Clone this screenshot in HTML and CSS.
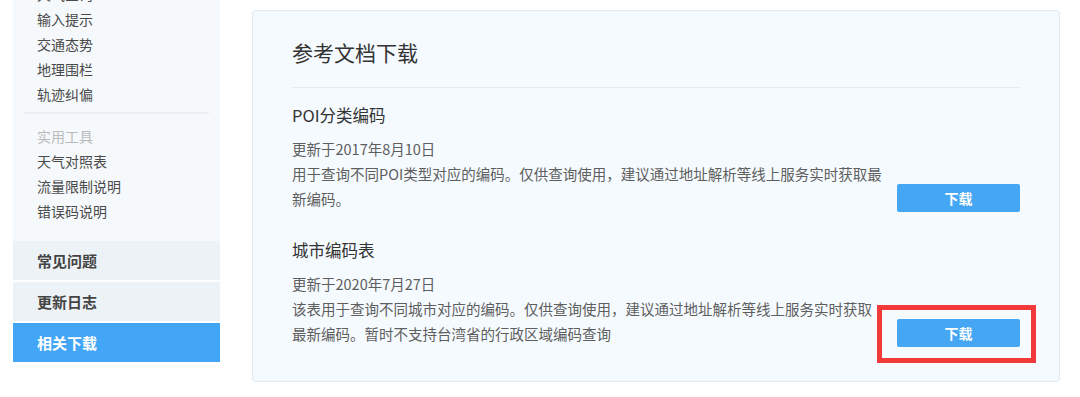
FILE: index.html
```html
<!DOCTYPE html>
<html lang="zh-CN">
<head>
<meta charset="utf-8">
<title>相关下载</title>
<link rel="stylesheet" href="styles.css">
</head>
<body>
<div class="page">
  <aside class="sidebar">
    <div class="menu">
      <ul class="menu-list">
        <li class="menu-item">天气查询</li>
        <li class="menu-item">输入提示</li>
        <li class="menu-item">交通态势</li>
        <li class="menu-item">地理围栏</li>
        <li class="menu-item">轨迹纠偏</li>
      </ul>
      <div class="menu-divider"></div>
      <ul class="menu-list">
        <li class="menu-item menu-label">实用工具</li>
        <li class="menu-item">天气对照表</li>
        <li class="menu-item">流量限制说明</li>
        <li class="menu-item">错误码说明</li>
      </ul>
    </div>
    <div class="side-block">常见问题</div>
    <div class="side-block">更新日志</div>
    <div class="side-block side-block-active">相关下载</div>
  </aside>

  <main class="card">
    <h1 class="card-title">参考文档下载</h1>
    <div class="card-divider"></div>

    <section class="doc">
      <div class="doc-text">
        <h2 class="doc-name">POI分类编码</h2>
        <p class="doc-date">更新于2017年8月10日</p>
        <p class="doc-desc">用于查询不同POI类型对应的编码。仅供查询使用，建议通过地址解析等线上服务实时获取最新编码。</p>
      </div>
      <div class="btn-wrap">
        <button class="btn">下载</button>
      </div>
    </section>

    <section class="doc doc-second">
      <div class="doc-text">
        <h2 class="doc-name">城市编码表</h2>
        <p class="doc-date">更新于2020年7月27日</p>
        <p class="doc-desc">该表用于查询不同城市对应的编码。仅供查询使用，建议通过地址解析等线上服务实时获取最新编码。暂时不支持台湾省的行政区域编码查询</p>
      </div>
      <div class="btn-wrap">
        <button class="btn">下载</button>
        <span class="highlight"></span>
      </div>
    </section>
  </main>
</div>
</body>
</html>
```

FILE: styles.css
```css
* {
  box-sizing: border-box;
}

html, body {
  margin: 0;
  padding: 0;
  background: #ffffff;
  overflow: hidden;
}

body {
  font-family: "Noto Sans CJK SC", "Microsoft YaHei", sans-serif;
  color: #555;
}

.page {
  display: flex;
  align-items: flex-start;
  width: 1080px;
  height: 397px;
}

/* Sidebar */
.sidebar {
  width: 207px;
  margin-left: 13px;
  display: flex;
  flex-direction: column;
  gap: 2px;
}

.menu {
  background: #f5f9fc;
  margin-top: -18px;
  padding-bottom: 17px;
  margin-bottom: -2px;
}

.menu-list {
  list-style: none;
  margin: 0;
  padding: 0;
}

.menu-item {
  padding-left: 24px;
  font-size: 14px;
  line-height: 25px;
  height: 25px;
  color: #4a4a4a;
}

.menu-label {
  color: #bbbbbb;
}

.menu-divider {
  height: 2px;
  background: #ebeff3;
  margin: 5px 11px 10px;
}

.side-block {
  height: 39px;
  line-height: 39px;
  padding-left: 24px;
  background: #edf2f6;
  font-size: 15px;
  font-weight: bold;
  color: #444;
}

.side-block-active {
  background: #42a5f5;
  color: #ffffff;
}

/* Card */
.card {
  margin-left: 32px;
  margin-top: 10px;
  width: 808px;
  height: 372px;
  background: #f5faff;
  border: 1px solid #e3e8ec;
  border-radius: 4px;
  padding: 25px 39px 0;
}

.card-title {
  margin: 0;
  font-size: 21px;
  line-height: 32px;
  font-weight: normal;
  color: #333;
}

.card-divider {
  height: 1px;
  background: #e6ebef;
  margin: 19px 0 15px;
}

.doc {
  display: flex;
  justify-content: space-between;
  align-items: flex-end;
}

.doc-second {
  margin-top: 27px;
}

.doc-text {
  width: 592px;
}

.doc-name {
  margin: 0;
  font-size: 16.5px;
  line-height: 24px;
  font-weight: normal;
  color: #333;
}

.doc-date {
  margin: 10px 0 0;
  font-size: 14.5px;
  line-height: 24px;
  color: #5e5e5e;
}

.doc-desc {
  margin: 0;
  font-size: 14.5px;
  line-height: 25px;
  color: #5e5e5e;
}

.btn-wrap {
  position: relative;
  margin-bottom: -1px;
}

.btn {
  display: block;
  width: 123px;
  height: 28px;
  border: none;
  border-radius: 2px;
  background: #45a6f4;
  color: #ffffff;
  font-family: "Noto Sans CJK SC", "Microsoft YaHei", sans-serif;
  font-size: 14px;
  font-weight: bold;
  padding: 0;
}

.highlight {
  position: absolute;
  left: -20px;
  right: -16px;
  top: -14px;
  bottom: -16px;
  border: 5px solid #f23a3a;
  pointer-events: none;
}
```
